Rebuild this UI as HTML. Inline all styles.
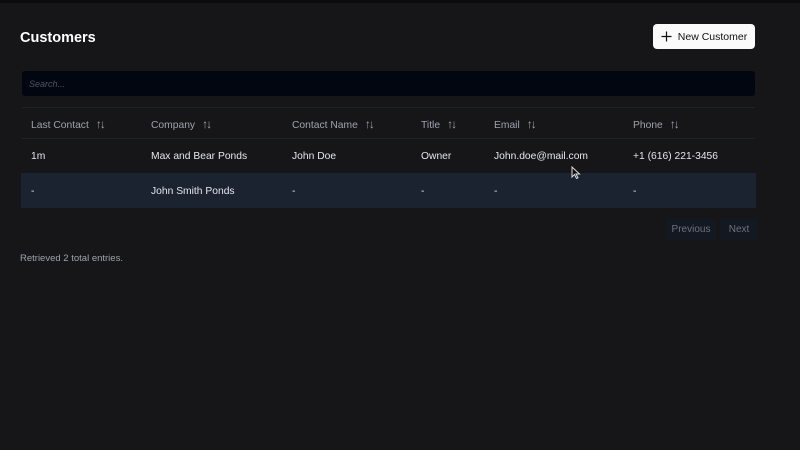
<!DOCTYPE html>
<html><head><meta charset="utf-8"><style>
body{margin:0;width:800px;height:450px;background:#161618;font-family:"Liberation Sans",sans-serif;position:relative;overflow:hidden;color:#e5e7eb}
.topbar{position:absolute;left:0;top:0;width:800px;height:3px;background:#0b0b0c}
h1{position:absolute;left:20px;top:30px;margin:0;font-size:14.5px;font-weight:bold;color:#fff}
.btn{position:absolute;left:653px;top:24px;width:102px;height:25px;background:#fafafa;border-radius:4px;color:#111;font-size:10.5px;display:flex;align-items:center;justify-content:center;gap:6px}
.search{position:absolute;left:22px;top:71px;width:733px;height:25px;background:#020611;border-radius:3px;font-size:9px;color:#4b5563;font-style:italic;line-height:27px;padding-left:7px;box-sizing:border-box}
.line{position:absolute;left:22px;width:733px;height:1px;background:#1e222b}
.row{position:absolute;left:21px;width:735px;height:35px;font-size:10.3px}
.row span{position:absolute;top:1px;line-height:35px}
.hdr{color:#9ca3af}
.sel{background:#1b2230}
.s{font-size:12px;letter-spacing:-2px;margin-left:7px;position:static!important}
.pg{position:absolute;top:219px;height:21px;line-height:22px;font-size:10px;color:#6b7280;background:#141821;text-align:center}
.foot{position:absolute;left:20px;top:253px;font-size:9.5px;color:#9ca3af}
</style></head><body>
<div class="topbar"></div>
<h1>Customers</h1>
<div class="btn"><svg width="11" height="11" viewBox="0 0 11 11"><path d="M5.5 0.5V10.5M0.5 5.5H10.5" stroke="#111" stroke-width="1.2"/></svg>New Customer</div>
<div class="search">Search...</div>
<div class="line" style="top:107px"></div>
<div class="row hdr" style="top:106px">
<span style="left:10px">Last Contact<span class="s">↑↓</span></span>
<span style="left:130px">Company<span class="s">↑↓</span></span>
<span style="left:271px">Contact Name<span class="s">↑↓</span></span>
<span style="left:400px">Title<span class="s">↑↓</span></span>
<span style="left:473px">Email<span class="s">↑↓</span></span>
<span style="left:612px">Phone<span class="s">↑↓</span></span>
</div>
<div class="line" style="top:138px"></div>
<div class="row" style="top:138px">
<span style="left:10px">1m</span><span style="left:130px">Max and Bear Ponds</span><span style="left:271px">John Doe</span><span style="left:400px">Owner</span><span style="left:473px">John.doe@mail.com</span><span style="left:612px">+1 (616) 221-3456</span>
</div>
<div class="row sel" style="top:173px">
<span style="left:10px">-</span><span style="left:130px">John Smith Ponds</span><span style="left:271px">-</span><span style="left:400px">-</span><span style="left:473px">-</span><span style="left:612px">-</span>
</div>
<svg style="position:absolute;left:571px;top:166px" width="10" height="14" viewBox="0 0 10 14"><path d="M1 1 L1 11 L3.5 8.5 L5.5 12.5 L7 11.8 L5 8 L8.5 8 Z" fill="#111" stroke="#ddd" stroke-width="1"/></svg>
<div class="pg" style="left:666px;width:50px">Previous</div>
<div class="pg" style="left:720px;width:38px">Next</div>
<div class="foot">Retrieved 2 total entries.</div>
</body></html>
